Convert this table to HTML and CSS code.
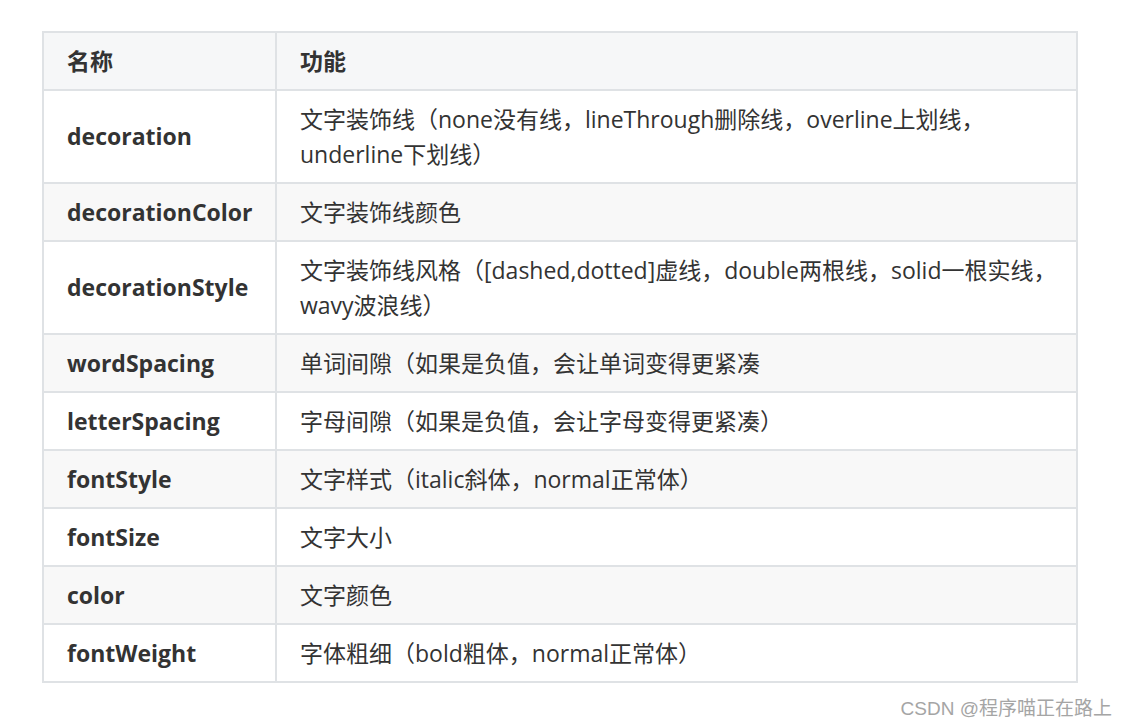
FILE: index.html
```html
<!DOCTYPE html>
<html lang="zh">
<head>
<meta charset="utf-8">
<title>Text 属性</title>
<link rel="stylesheet" href="styles.css">
</head>
<body>
<main class="page">
  <table class="props">
    <thead>
      <tr><th class="col-name">名称</th><th class="col-desc">功能</th></tr>
    </thead>
    <tbody>
      <tr><td class="name">decoration</td><td class="desc">文字装饰线（none没有线，lineThrough删除线，overline上划线，underline下划线）</td></tr>
      <tr><td class="name">decorationColor</td><td class="desc">文字装饰线颜色</td></tr>
      <tr><td class="name">decorationStyle</td><td class="desc">文字装饰线风格（[dashed,dotted]虚线，double两根线，solid一根实线，wavy波浪线）</td></tr>
      <tr><td class="name">wordSpacing</td><td class="desc">单词间隙（如果是负值，会让单词变得更紧凑</td></tr>
      <tr><td class="name">letterSpacing</td><td class="desc">字母间隙（如果是负值，会让字母变得更紧凑）</td></tr>
      <tr><td class="name">fontStyle</td><td class="desc">文字样式（italic斜体，normal正常体）</td></tr>
      <tr><td class="name">fontSize</td><td class="desc">文字大小</td></tr>
      <tr><td class="name">color</td><td class="desc">文字颜色</td></tr>
      <tr><td class="name">fontWeight</td><td class="desc">字体粗细（bold粗体，normal正常体）</td></tr>
    </tbody>
  </table>
  <div class="watermark">CSDN @程序喵正在路上</div>
</main>
</body>
</html>
```

FILE: styles.css
```css
html, body {
  margin: 0;
  padding: 0;
  background: #ffffff;
}

.page {
  width: 1128px;
  height: 726px;
  box-sizing: border-box;
  padding: 31px 50px 0 42px;
  font-family: "Open Sans", "Noto Sans CJK SC", sans-serif;
  color: #333333;
  display: flex;
  flex-direction: column;
}

.props {
  width: 1036px;
  border-collapse: collapse;
  font-size: 23px;
  line-height: 35px;
}

.props th,
.props td {
  border: 2px solid #dfe2e5;
  padding: 10.5px 22px 10.5px 23px;
  text-align: left;
  vertical-align: middle;
}

.props .col-desc,
.props .desc {
  padding-left: 23px;
  padding-right: 10px;
}

.props th {
  font-weight: 700;
  background: #f6f7f8;
}

.props .col-name {
  width: 186px;
}

.props td.name {
  font-weight: 700;
}

.props tbody tr:nth-child(even) {
  background: #f8f8f8;
}

.watermark {
  align-self: flex-end;
  margin-top: 15px;
  margin-right: -34px;
  font-family: "Liberation Sans", "Noto Sans CJK SC", sans-serif;
  font-size: 19px;
  line-height: 22px;
  color: #a5a5a5;
}
```
